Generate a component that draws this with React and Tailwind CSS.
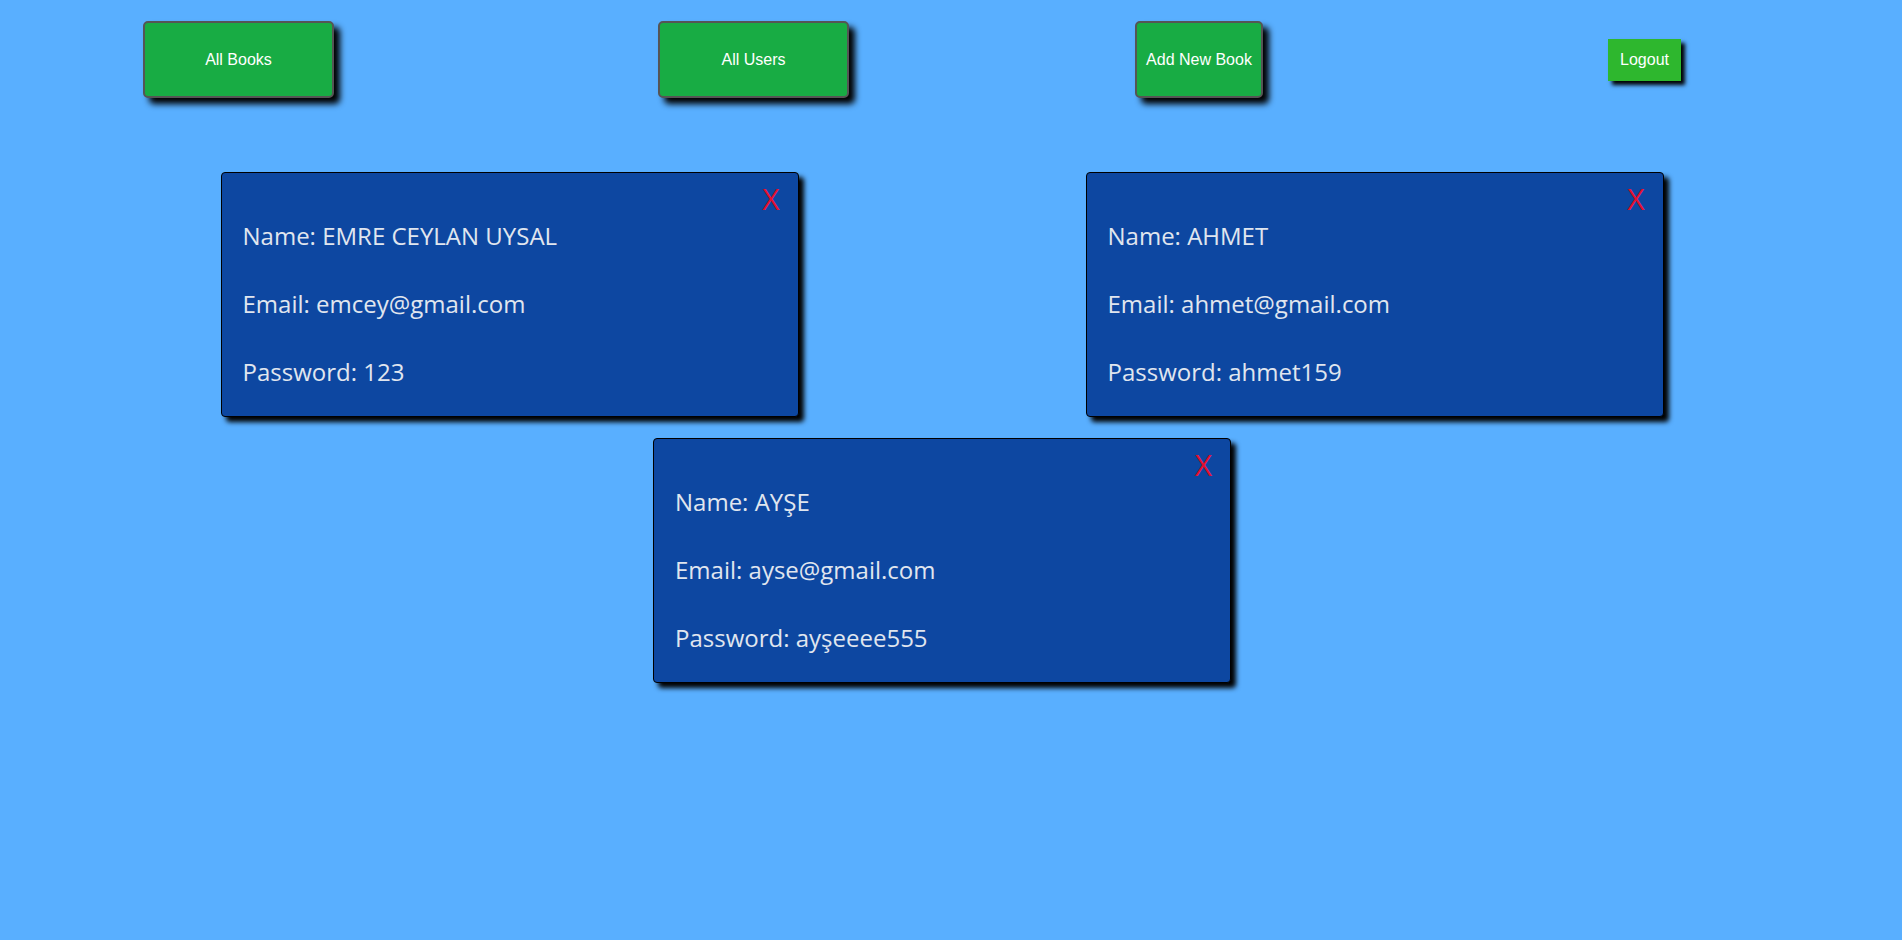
import React from "react";

const users = [
  { name: "EMRE CEYLAN UYSAL", email: "emcey@gmail.com", password: "123" },
  { name: "AHMET", email: "ahmet@gmail.com", password: "ahmet159" },
  { name: "AYŞE", email: "ayse@gmail.com", password: "ayşeeee555" },
];

function NavButton({ children, className }) {
  return (
    <button
      className={
        "h-[77px] rounded-[5px] border-2 border-[#555555] bg-[#18ac44] text-[16px] text-white shadow-[6px_6px_6px_#000] " +
        className
      }
      style={{ fontFamily: '"Liberation Sans", Arial, sans-serif' }}
    >
      {children}
    </button>
  );
}

function UserCard({ user }) {
  return (
    <div
      className="relative flex w-[578px] flex-col gap-[44px] rounded-[4px] border border-black bg-[#0d47a1] px-[21px] pb-[32px] pt-[51px] text-[24px] leading-none text-[#e0e6ef] shadow-[5px_5px_5px_#000]"
      style={{ fontFamily: '"Open Sans", sans-serif' }}
    >
      <span className="absolute right-[18px] top-[11px] text-[30px] leading-none text-[#e3102f]">
        X
      </span>
      <p>Name: {user.name}</p>
      <p>Email: {user.email}</p>
      <p>Password: {user.password}</p>
    </div>
  );
}

export default function App() {
  return (
    <div className="min-h-[940px] w-full bg-[#59afff]">
      <nav className="flex items-center pt-[21px]">
        <NavButton className="ml-[143px] w-[191px]">All Books</NavButton>
        <NavButton className="ml-[324px] w-[191px]">All Users</NavButton>
        <NavButton className="ml-[286px] w-[128px]">Add New Book</NavButton>
        <button
          className="ml-[345px] h-[42px] w-[73px] bg-[#2eb72e] text-[16px] text-white shadow-[4px_4px_4px_#000]"
          style={{ fontFamily: '"Liberation Sans", Arial, sans-serif' }}
        >
          Logout
        </button>
      </nav>
      <div className="mt-[74px] flex w-[1884px] flex-wrap justify-center gap-x-[287px] gap-y-[21px]">
        {users.map((u) => (
          <UserCard key={u.email} user={u} />
        ))}
      </div>
    </div>
  );
}
